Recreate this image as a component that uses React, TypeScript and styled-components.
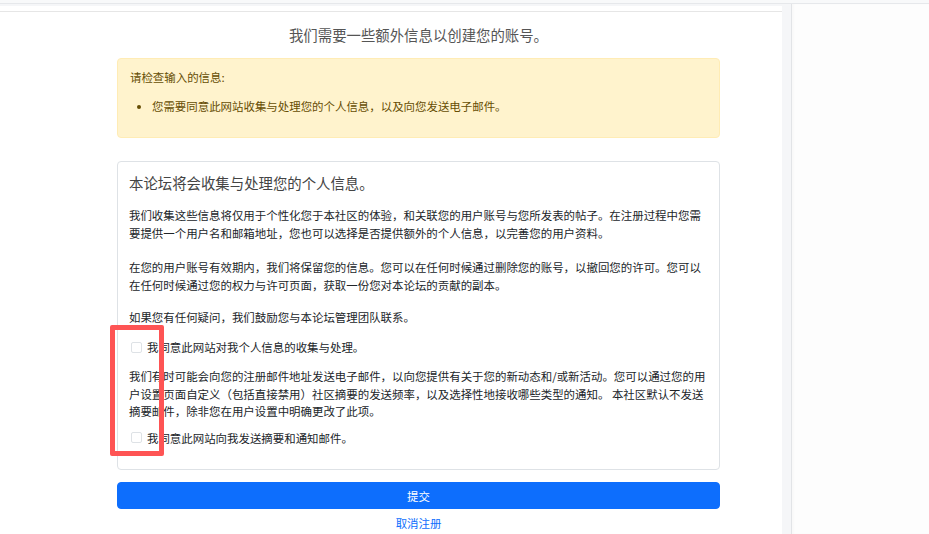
import React from "react";
import styled, { createGlobalStyle } from "styled-components";

const Global = createGlobalStyle`
  html, body { margin: 0; padding: 0; height: 100%; }
  body {
    background: #f5f6f8;
    font-family: "Noto Sans CJK SC", "Noto Sans", "Liberation Sans", sans-serif;
    color: #212529;
    overflow: hidden;
  }
  #root { min-height: 100%; }
`;

const Page = styled.div`
  position: relative;
  display: flex;
  flex-direction: column;
  height: 534px;
`;

const TopStrip = styled.div`
  height: 3px;
  background: #f8f9fa;
  border-bottom: 1px solid #e6e8eb;
  flex: none;
`;

const Body = styled.div`
  flex: 1;
  display: flex;
  min-height: 0;
`;

const MainCol = styled.div`
  width: 782px;
  flex: none;
  padding-top: 2px;
`;

const Gutter = styled.div`
  width: 9px;
  flex: none;
  background: #f5f6f8;
`;

const Sidebar = styled.aside`
  flex: 1;
  background: #fdfdfd;
  border-left: 1px solid #e2e4e7;
  box-shadow: inset 2px 0 2px rgba(0, 0, 0, 0.02);
`;

const Panel = styled.div`
  background: #fff;
  height: 100%;
  padding-top: 5px;
  box-sizing: border-box;
`;

const PanelInner = styled.div`
  border-top: 1px solid #e6e6e6;
  padding: 0 62px 0 117px;
`;

const Title = styled.h4`
  margin: 0;
  padding-top: 13px;
  height: 33px;
  box-sizing: border-box;
  text-align: center;
  font-size: 14.4px;
  line-height: 20px;
  font-weight: 400;
  color: #555;
`;

const Alert = styled.div`
  margin-top: 13px;
  background: #fff3cd;
  border: 1px solid #ffecb5;
  border-radius: 4px;
  color: #664d03;
  font-size: 11.45px;
  line-height: 18px;
  padding: 9px 12px 0 12px;
  height: 80px;
  box-sizing: border-box;
`;

const AlertTitle = styled.div``;

const AlertList = styled.ul`
  margin: 11px 0 0 0;
  padding-left: 22px;
`;

const Card = styled.div`
  margin-top: 23px;
  border: 1px solid #dee2e6;
  border-radius: 4px;
  padding: 11px 11px 21px 11px;
  height: 309px;
  box-sizing: border-box;
  font-size: 11.45px;
  line-height: 18px;
  color: #212529;
`;

const CardHeading = styled.h5`
  margin: 0 0 13px 0;
  font-size: 14.4px;
  line-height: 20px;
  font-weight: 400;
  color: #444;
`;

const Para = styled.p<{ $mb?: number; $lh?: number }>`
  margin: 0 0 ${(p) => p.$mb ?? 16}px 0;
  line-height: ${(p) => p.$lh ?? 18}px;
`;

const CheckRow = styled.label<{ $mb?: number }>`
  display: flex;
  align-items: center;
  gap: 5px;
  margin: 0 0 ${(p) => p.$mb ?? 0}px 2px;
  height: 18px;
  color: #212529;
`;

const Box = styled.span`
  width: 11px;
  height: 11px;
  box-sizing: border-box;
  border: 1px solid #dee2e6;
  border-radius: 2px;
  background: #fff;
  flex: none;
`;

const Submit = styled.button`
  display: block;
  width: 100%;
  margin-top: 12px;
  height: 27px;
  border: 1px solid #0d6efd;
  border-radius: 4px;
  background: #0d6efd;
  color: #fff;
  font-family: inherit;
  font-size: 11.45px;
  padding: 0;
`;

const CancelLink = styled.a`
  display: block;
  text-align: center;
  margin-top: 5px;
  font-size: 11.45px;
  line-height: 18px;
  color: #0d6efd;
  text-decoration: none;
`;

const Annotation = styled.div`
  position: absolute;
  left: 110px;
  top: 325px;
  width: 54px;
  height: 131px;
  box-sizing: border-box;
  border: 5px solid #fe5454;
  border-radius: 2px;
  pointer-events: none;
`;

export default function App() {
  return (
    <>
      <Global />
      <Page>
        <TopStrip />
        <Body>
          <MainCol>
            <Panel>
              <PanelInner>
                <Title>我们需要一些额外信息以创建您的账号。</Title>
                <Alert>
                  <AlertTitle>请检查输入的信息:</AlertTitle>
                  <AlertList>
                    <li>您需要同意此网站收集与处理您的个人信息，以及向您发送电子邮件。</li>
                  </AlertList>
                </Alert>
                <Card>
                  <CardHeading>本论坛将会收集与处理您的个人信息。</CardHeading>
                  <Para>
                    我们收集这些信息将仅用于个性化您于本社区的体验，和关联您的用户账号与您所发表的帖子。在注册过程中您需要提供一个用户名和邮箱地址，您也可以选择是否提供额外的个人信息，以完善您的用户资料。
                  </Para>
                  <Para $mb={14}>
                    在您的用户账号有效期内，我们将保留您的信息。您可以在任何时候通过删除您的账号，以撤回您的许可。您可以在任何时候通过您的权力与许可页面，获取一份您对本论坛的贡献的副本。
                  </Para>
                  <Para $mb={12}>如果您有任何疑问，我们鼓励您与本论坛管理团队联系。</Para>
                  <CheckRow $mb={12}>
                    <Box />
                    我同意此网站对我个人信息的收集与处理。
                  </CheckRow>
                  <Para $mb={8} $lh={17.5}>
                    我们有时可能会向您的注册邮件地址发送电子邮件，以向您提供有关于您的新动态和/或新活动。您可以通过您的用户设置页面自定义（包括直接禁用）社区摘要的发送频率，以及选择性地接收哪些类型的通知。 本社区默认不发送摘要邮件，除非您在用户设置中明确更改了此项。
                  </Para>
                  <CheckRow>
                    <Box />
                    我同意此网站向我发送摘要和通知邮件。
                  </CheckRow>
                </Card>
                <Submit type="button">提交</Submit>
                <CancelLink href="#">取消注册</CancelLink>
              </PanelInner>
            </Panel>
          </MainCol>
          <Gutter />
          <Sidebar />
        </Body>
        <Annotation />
      </Page>
    </>
  );
}
